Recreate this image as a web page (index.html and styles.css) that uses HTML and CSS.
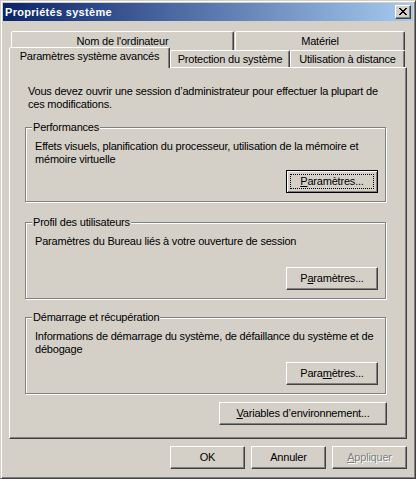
FILE: index.html
```html
<!DOCTYPE html>
<html lang="fr">
<head>
  <meta charset="UTF-8">
  <title>Propriétés système</title>
  <link rel="stylesheet" href="styles.css">
</head>
<body>
  <div class="window">
    <div class="titlebar">
      <span class="title">Propriétés système</span>
      <button class="close" aria-label="Fermer">
        <svg width="8" height="7" viewBox="0 0 8 7" shape-rendering="crispEdges"><path d="M0 0h2v1H0zM6 0h2v1H6zM1 1h2v1H1zM5 1h2v1H5zM2 2h4v1H2zM3 3h2v1H3zM2 4h4v1H2zM1 5h2v1H1zM5 5h2v1H5zM0 6h2v1H0zM6 6h2v1H6z"/></svg>
      </button>
    </div>
    <div class="dialog">
      <div class="tabs">
        <div class="tab-row back">
          <div class="tab tab-computer">Nom de l'ordinateur</div>
          <div class="tab tab-hardware">Matériel</div>
        </div>
        <div class="tab-row front">
          <div class="tab tab-advanced active">Paramètres système avancés</div>
          <div class="tab tab-protection">Protection du système</div>
          <div class="tab tab-remote">Utilisation à distance</div>
        </div>
      </div>
      <div class="panel">
        <p class="intro">Vous devez ouvrir une session d’administrateur pour effectuer la plupart de<br>ces modifications.</p>

        <div class="group perf">
          <div class="group-title">Performances</div>
          <p>Effets visuels, planification du processeur, utilisation de la mémoire et<br>mémoire virtuelle</p>
          <div class="actions">
            <button class="btn btn-param default"><span class="focus"><u>P</u>aramètres...</span></button>
          </div>
        </div>

        <div class="group profile">
          <div class="group-title">Profil des utilisateurs</div>
          <p>Paramètres du Bureau liés à votre ouverture de session</p>
          <div class="actions">
            <button class="btn btn-param">P<u>a</u>ramètres...</button>
          </div>
        </div>

        <div class="group startup">
          <div class="group-title">Démarrage et récupération</div>
          <p>Informations de démarrage du système, de défaillance du système et de<br>débogage</p>
          <div class="actions">
            <button class="btn btn-param">Para<u>m</u>ètres...</button>
          </div>
        </div>

        <div class="actions panel-actions">
          <button class="btn btn-env"><u>V</u>ariables d’environnement...</button>
        </div>
      </div>
      <div class="footer">
        <button class="btn">OK</button>
        <button class="btn">Annuler</button>
        <button class="btn" disabled><u>A</u>ppliquer</button>
      </div>
    </div>
  </div>
</body>
</html>
```

FILE: styles.css
```css
/* Basic Reset */
* {
  margin: 0;
  padding: 0;
  box-sizing: border-box;
}
body {
  font-family: "Liberation Sans", Arial, sans-serif;
  font-size: 11px;
  line-height: 13px;
  letter-spacing: -0.2px;
  color: #000;
  background: #d4d0c8;
}

/* Window frame */
.window {
  width: 416px;
  height: 479px;
  background: #d4d0c8;
  border: 1px solid;
  border-color: #d4d0c8 #404040 #404040 #d4d0c8;
  box-shadow: inset 1px 1px #fff, inset -1px -1px #808080;
  padding: 2px;
}
.titlebar {
  height: 18px;
  display: flex;
  align-items: center;
  justify-content: space-between;
  padding: 0 2px;
  background: linear-gradient(to right, #0a246a, #a6caf0);
  color: #fff;
  font-weight: bold;
  letter-spacing: 0.3px;
}
.close {
  width: 16px;
  height: 14px;
  display: flex;
  justify-content: center;
  align-items: flex-start;
  padding-top: 2px;
  background: #d4d0c8;
  border: 1px solid;
  border-color: #fff #404040 #404040 #fff;
  box-shadow: inset -1px -1px #808080;
}
.close svg {
  display: block;
}

.dialog {
  padding: 10px 6px 0;
}

/* Tabs */
.tab-row {
  display: flex;
  align-items: flex-start;
  padding: 0 2px;
}
.tab {
  background: #d4d0c8;
  border: 1px solid;
  border-bottom: 0;
  border-color: #fff #404040 transparent #fff;
  box-shadow: inset -1px 0 #808080;
  border-radius: 2px 2px 0 0;
  text-align: center;
  white-space: nowrap;
  height: 17px;
  padding-top: 2px;
}
.back {
  height: 19px;
}
.back .tab {
  height: 19px;
  padding-top: 3px;
}
.tab-computer { width: 223px; }
.tab-hardware { width: 170px; margin-left: 1px; }
.tab-advanced { width: 161px; margin-left: -2px; }
.tab-protection { width: 120px; }
.tab-remote { width: 115px; }
.tab.active {
  position: relative;
  z-index: 1;
  height: 21px;
  margin-top: -3px;
  margin-bottom: -1px;
}

/* Panel */
.panel {
  border: 1px solid;
  border-color: #fff #404040 #404040 #fff;
  box-shadow: inset -1px -1px #808080;
  padding: 17px 19px 13px 15px;
}
.panel p {
  white-space: nowrap;
}
.intro {
  margin-left: 3px;
}

.group {
  display: flex;
  flex-direction: column;
  border: 1px solid #808080;
  box-shadow: inset 1px 1px #fff, 1px 1px #fff;
  padding: 0 7px 8px 9px;
  margin-right: 1px;
  height: 77px;
  margin-top: 18px;
}
.group.perf {
  height: 75px;
  margin-top: 16px;
}
.group.profile {
  margin-top: 20px;
}
.group-title {
  align-self: flex-start;
  margin: -7px 0 0 -3px;
  padding: 0 1px;
  background: #d4d0c8;
}
.group p {
  margin-top: 6px;
}
.actions {
  margin-top: auto;
  display: flex;
  justify-content: flex-end;
}
.panel-actions {
  margin-top: 8px;
}

/* Buttons */
.btn {
  width: 75px;
  height: 23px;
  font: inherit;
  line-height: 13px;
  letter-spacing: inherit;
  color: #000;
  background: #d4d0c8;
  border: 1px solid;
  border-color: #fff #404040 #404040 #fff;
  box-shadow: inset -1px -1px #808080;
  padding: 0;
}
.btn-param { width: 92px; }
.btn-env { width: 168px; }
.btn.default {
  border-color: #000;
  box-shadow: inset 1px 1px #fff, inset -1px -1px #808080;
}
.btn .focus {
  display: block;
  margin: 3px;
  border: 1px dotted #000;
}
.btn:disabled {
  color: #808080;
  text-shadow: 1px 1px 0 #fff;
}

.footer {
  display: flex;
  justify-content: flex-end;
  gap: 6px;
  margin-top: 7px;
}
```
